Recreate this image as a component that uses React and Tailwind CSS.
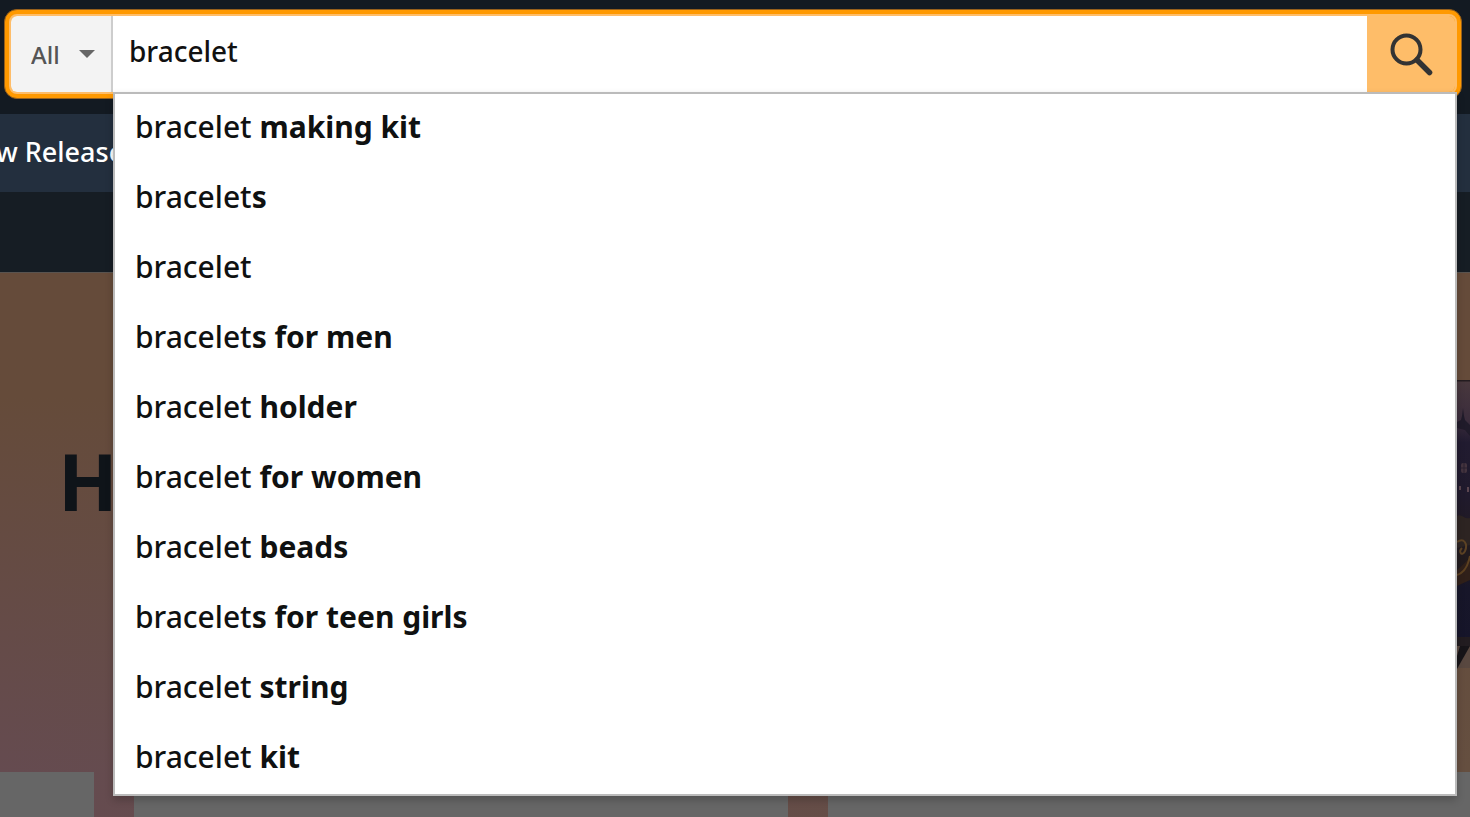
import React, { useState } from 'react';

const SUGGESTIONS = [
  { prefix: 'bracelet', rest: ' making kit' },
  { prefix: 'bracelet', rest: 's' },
  { prefix: 'bracelet', rest: '' },
  { prefix: 'bracelet', rest: 's for men' },
  { prefix: 'bracelet', rest: ' holder' },
  { prefix: 'bracelet', rest: ' for women' },
  { prefix: 'bracelet', rest: ' beads' },
  { prefix: 'bracelet', rest: 's for teen girls' },
  { prefix: 'bracelet', rest: ' string' },
  { prefix: 'bracelet', rest: ' kit' },
];

function SearchIcon() {
  return (
    <svg width="44" height="44" viewBox="0 0 44 44" fill="none" stroke="#333" aria-hidden="true">
      <circle cx="17.5" cy="17.5" r="14" strokeWidth="4" />
      <path d="M28 28L40.5 40.5" strokeWidth="5.5" strokeLinecap="round" />
    </svg>
  );
}

function Suggestions() {
  return (
    <ul className="absolute left-[109px] right-0 top-[84px] border-2 border-[#bbb] bg-white shadow-[0_4px_8px_rgba(0,0,0,0.2)]">
      {SUGGESTIONS.map((s, idx) => (
        <li key={idx}>
          <button type="button" className="flex h-[70px] w-full items-center whitespace-pre pb-1 pl-5 text-left text-[30px] font-medium leading-none text-[#0f1111]">
            {s.prefix}
            <b className="font-bold">{s.rest}</b>
          </button>
        </li>
      ))}
    </ul>
  );
}

function SearchBar() {
  const [query, setQuery] = useState('bracelet');

  return (
    <form
      role="search"
      onSubmit={(e) => e.preventDefault()}
      className="rounded-[13px] border border-[#965f1b] bg-[#ff9900] p-1"
    >
      {/* Light ring sits inside the orange focus ring */}
      <div className="flex h-20 rounded-lg border-2 border-[#febd69]">
        <div className="relative w-[102px] shrink-0 rounded-l-md border-r-2 border-[#cdcdcd] bg-[#f3f3f3]">
          <select aria-label="Search in" className="h-full w-full appearance-none pl-5 pt-0.5 text-2xl font-medium text-[#555] outline-none">
            <option>All</option>
          </select>
          <svg className="pointer-events-none absolute right-4 top-[34px]" width="16" height="8" viewBox="0 0 16 8" aria-hidden="true">
            <path d="M0 0H16L8 8Z" fill="#666" />
          </svg>
        </div>
        <input
          type="text"
          aria-label="Search"
          value={query}
          onChange={(e) => setQuery(e.target.value)}
          className="min-w-0 flex-1 bg-white pb-1.5 pl-4 text-[28px] font-medium text-[#111] outline-none"
        />
        <button type="submit" aria-label="Go" className="flex w-[88px] shrink-0 items-center justify-center rounded-r-md bg-[#febd69]">
          <SearchIcon />
        </button>
      </div>
    </form>
  );
}

function Television() {
  return (
    <svg className="mt-[107px] shrink-0" width="26" height="292" viewBox="0 0 26 292" aria-hidden="true">
      <defs>
        <linearGradient id="screen" x1="0" y1="0" x2="0" y2="1">
          <stop offset="0" stopColor="#49383d" />
          <stop offset="0.16" stopColor="#3a2c3c" />
          <stop offset="0.24" stopColor="#211b30" />
          <stop offset="0.45" stopColor="#201a2c" />
          <stop offset="0.7" stopColor="#211a1c" />
          <stop offset="0.8" stopColor="#171629" />
          <stop offset="1" stopColor="#16152a" />
        </linearGradient>
      </defs>
      <rect width="26" height="260" fill="url(#screen)" />
      <path d="M0 0H26" stroke="#241c20" strokeWidth="3" />
      <path d="M13 42L17 40L18 36L19 28L20 36L21 40L26 45V56L21 50L13 48Z" fill="#201b2a" />
      <rect x="17" y="83" width="6" height="10" rx="2" fill="#44343f" />
      <path d="M20 83V93M17 88H23" stroke="#2a2030" />
      <path d="M16 106V110M24 107V112" stroke="#5b4650" strokeWidth="2" />
      <path d="M13 136C17 133 21 140 26 138V165L13 168Z" fill="#2d2422" />
      <path d="M13 162C20 157 24 164 21 171C18 177 14 172 18 168" stroke="#5c4224" strokeWidth="2" fill="none" />
      <path d="M13 190L26 178V200L13 206Z" fill="#302019" />
      <path d="M13 195C20 193 24 186 26 176" stroke="#5c4020" strokeWidth="2" fill="none" />
      <rect y="257" width="26" height="9" fill="#221c20" />
      <path d="M13 266H26V288H13Z" fill="#594840" />
      <path d="M16 266H26L13 289V276Z" fill="#171418" />
    </svg>
  );
}

export default function App() {
  return (
    <div className="flex min-h-screen flex-col overflow-hidden bg-[#654b3c] font-['Noto_Sans','Open_Sans',sans-serif]">
      <header className="relative z-10 h-[114px] bg-[#131a22] pl-1 pr-2 pt-2">
        <div className="relative pt-px">
          <SearchBar />
          <div className="absolute inset-x-0 top-0 mr-[5px]">
            <Suggestions />
          </div>
        </div>
      </header>

      <nav className="flex h-[78px] items-center bg-[#232f3e] pb-1">
        <a href="#new-releases" className="-ml-10 whitespace-nowrap text-[27px] font-medium leading-none text-white">
          New Releases
        </a>
      </nav>
      <div className="h-[81px] border-b border-[#59534f] bg-[#161d24]" />

      <main className="flex flex-1 flex-col bg-linear-to-r from-[#654b50] to-[#654f40]">
        <section className="flex h-[499px] items-start justify-between bg-linear-to-b from-[#654b3a] from-25% to-transparent">
          <h1 className="pl-[58px] pt-[155px] text-[78px] font-bold leading-[106px] text-[#0f1419]">H</h1>
          <Television />
        </section>
        {/* Top edge of the product cards */}
        <div className="flex flex-1 gap-10">
          <div className="w-[94px] bg-[#666]" />
          <div className="w-[654px] bg-[#666]" />
          <div className="flex-1 bg-[#666]" />
        </div>
      </main>
    </div>
  );
}
